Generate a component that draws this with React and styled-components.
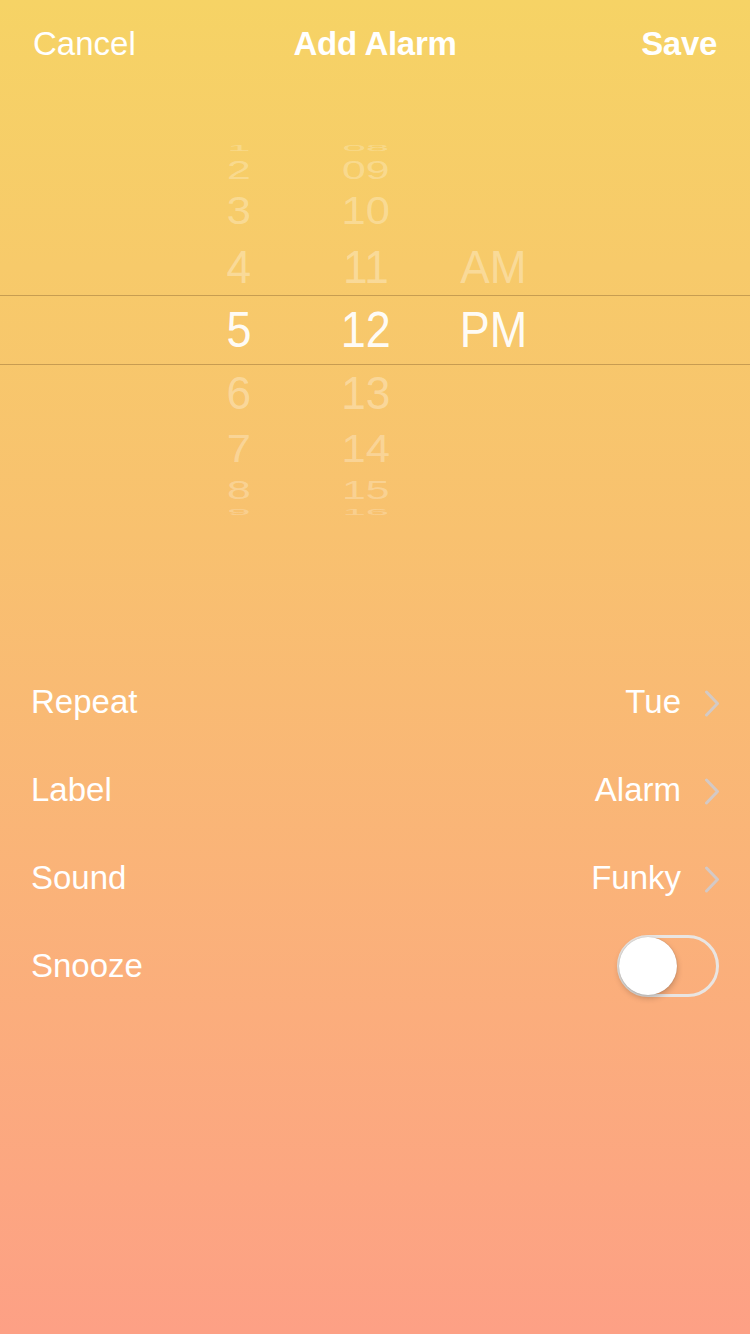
import React from "react"
import styled, { createGlobalStyle } from "styled-components"

const GlobalStyle = createGlobalStyle`
  html, body {
    margin: 0;
    padding: 0;
  }
  body {
    font-family: "Liberation Sans", Arial, sans-serif;
    -webkit-font-smoothing: antialiased;
  }
`

// wheel geometry: radius of the drum and the angle between rows
const RADIUS = 188
const STEP = 20
const rad = (deg) => (deg * Math.PI) / 180

const slotFor = (k) => {
  const lo = Math.max(-90, (k - 0.5) * STEP)
  const hi = Math.min(90, (k + 0.5) * STEP)
  const height = RADIUS * (Math.sin(rad(hi)) - Math.sin(rad(lo)))
  const squash = Math.cos(rad(k * STEP))
  return { height, squash }
}

const hours = ["1", "2", "3", "4", "5", "6", "7", "8", "9"]
const minutes = ["08", "09", "10", "11", "12", "13", "14", "15", "16"]
const periods = ["", "", "", "AM", "PM", "", "", "", ""]

const settings = [
  { label: "Repeat", value: "Tue" },
  { label: "Label", value: "Alarm" },
  { label: "Sound", value: "Funky" },
]

const Chevron = () => (
  <svg width="16" height="27" viewBox="0 0 16 27" fill="none">
    <polyline
      points="2.5,2 13.5,13.5 2.5,25"
      stroke="rgba(205, 205, 212, 0.85)"
      strokeWidth="3"
      strokeLinecap="round"
      strokeLinejoin="round"
    />
  </svg>
)

const Wheel = ({ items }) => (
  <WheelColumn>
    {items.map((item, i) => {
      const k = i - 4
      const { height, squash } = slotFor(k)
      const shrink = 0.9 - Math.abs(k) * 0.015
      return (
        <Slot key={i} style={{ height }}>
          <Digit
            $selected={k === 0}
            $far={Math.abs(k)}
            style={{ transform: `scale(${shrink}, ${squash})` }}
          >
            {item}
          </Digit>
        </Slot>
      )
    })}
  </WheelColumn>
)

const App = () => {
  return (
    <>
      <GlobalStyle />
      <Screen>
        <Header>
          <NavButton>Cancel</NavButton>
          <Title>Add Alarm</Title>
          <NavButton $bold>Save</NavButton>
        </Header>

        <Picker>
          <SelectionBand />
          <Wheels>
            <Wheel items={hours} />
            <Wheel items={minutes} />
            <Wheel items={periods} />
          </Wheels>
        </Picker>

        <SettingsList>
          {settings.map((s) => (
            <Row key={s.label}>
              <RowLabel>{s.label}</RowLabel>
              <RowValue>
                {s.value}
                <Chevron />
              </RowValue>
            </Row>
          ))}
          <Row>
            <RowLabel>Snooze</RowLabel>
            <Toggle>
              <Knob />
            </Toggle>
          </Row>
        </SettingsList>
      </Screen>
    </>
  )
}

export default App

const Screen = styled.div`
  width: 750px;
  min-height: 1334px;
  background: linear-gradient(180deg, #f6d365 0%, #f8c16f 40%, #fda085 100%);
  color: #fff;
  overflow: hidden;
`

const Header = styled.header`
  height: 88px;
  padding: 0 33px;
  display: grid;
  grid-template-columns: 1fr auto 1fr;
  align-items: center;
`

const NavButton = styled.div`
  font-size: 33px;
  font-weight: ${(p) => (p.$bold ? 700 : 400)};
  justify-self: ${(p) => (p.$bold ? "end" : "start")};
  letter-spacing: ${(p) => (p.$bold ? "-0.3px" : "0")};
`

const Title = styled.div`
  font-size: 33px;
  font-weight: 700;
  letter-spacing: -0.3px;
`

const Picker = styled.section`
  position: relative;
  margin-top: 54px;
  height: 376px;
  overflow: hidden;
`

const SelectionBand = styled.div`
  position: absolute;
  left: 0;
  right: 0;
  top: 153px;
  height: 68px;
  border-top: 1px solid rgba(160, 120, 60, 0.55);
  border-bottom: 1px solid rgba(160, 120, 60, 0.55);
`

const Wheels = styled.div`
  display: grid;
  grid-template-columns: repeat(3, 127px);
  justify-content: center;
  padding-right: 18px;
`

const WheelColumn = styled.div`
  display: flex;
  flex-direction: column;
  align-items: center;
`

const Slot = styled.div`
  display: flex;
  align-items: center;
  justify-content: center;
  overflow: visible;
`

const Digit = styled.span`
  font-size: 50px;
  line-height: 1;
  white-space: nowrap;
  color: ${(p) =>
    p.$selected
      ? "rgba(255, 255, 255, 0.94)"
      : `rgba(255, 255, 255, ${0.36 - p.$far * 0.03})`};
`

const SettingsList = styled.div`
  margin-top: 140px;
  padding: 0 30px 0 31px;
  display: flex;
  flex-direction: column;
`

const Row = styled.div`
  height: 88px;
  display: flex;
  align-items: center;
  justify-content: space-between;
`

const RowLabel = styled.span`
  font-size: 33px;
`

const RowValue = styled.span`
  display: flex;
  align-items: center;
  gap: 23px;
  font-size: 33px;
  svg {
    margin-top: 2px;
  }
`

const Toggle = styled.div`
  position: relative;
  width: 102px;
  height: 62px;
  box-sizing: border-box;
  border-radius: 31px;
  border: 3px solid rgba(232, 232, 232, 0.95);
  margin-right: 1px;
`

const Knob = styled.div`
  position: absolute;
  left: -1px;
  top: -1px;
  width: 58px;
  height: 58px;
  border-radius: 50%;
  background: #fff;
  box-shadow: 0 3px 6px rgba(0, 0, 0, 0.22), 0 0 1px rgba(0, 0, 0, 0.25);
`
